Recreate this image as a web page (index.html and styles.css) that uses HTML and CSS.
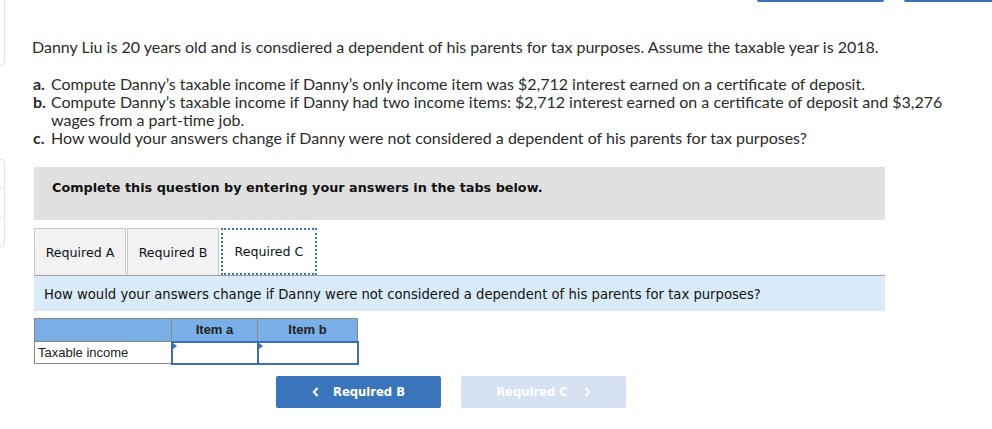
FILE: index.html
```html
<!DOCTYPE html>
<html>
<head>
<meta charset="utf-8">
<link rel="stylesheet" href="styles.css">
</head>
<body>
<div class="side-frag frag-top"></div>
<div class="side-frag frag-mid"><div class="frag-row"></div><div class="frag-row"></div><div class="frag-row last"></div></div>
<div class="top-bar bar-1"></div>
<div class="top-bar bar-2"></div>

<main class="page">
  <div class="question">
    <p class="intro">Danny Liu is 20 years old and is consdiered a dependent of his parents for tax purposes. Assume the taxable year is 2018.</p>
    <div class="parts">
      <div class="part"><span class="lbl">a.</span><span class="txt">Compute Danny’s taxable income if Danny’s only income item was $2,712 interest earned on a certificate of deposit.</span></div>
      <div class="part"><span class="lbl">b.</span><span class="txt">Compute Danny’s taxable income if Danny had two income items: $2,712 interest earned on a certificate of deposit and $3,276 wages from a part-time job.</span></div>
      <div class="part"><span class="lbl">c.</span><span class="txt">How would your answers change if Danny were not considered a dependent of his parents for tax purposes?</span></div>
    </div>
  </div>

  <div class="notice">Complete this question by entering your answers in the tabs below.</div>

  <div class="tabs">
    <div class="tab">Required A</div>
    <div class="tab">Required B</div>
    <div class="tab active">Required C</div>
  </div>
  <div class="tab-info">How would your answers change if Danny were not considered a dependent of his parents for tax purposes?</div>

  <table class="grid">
    <tr class="head"><th class="c1"></th><th class="c2">Item a</th><th class="c3">Item b</th></tr>
    <tr><td class="c1 label">Taxable income</td><td class="c2 inp"><span class="mark"></span></td><td class="c3 inp"><span class="mark"></span></td></tr>
  </table>

  <div class="nav">
    <button class="btn prev"><svg class="chev" width="7" height="10" viewBox="0 0 7 10"><path d="M5.5 1 L1.8 5 L5.5 9" fill="none" stroke="#fff" stroke-width="2"/></svg>Required B</button>
    <button class="btn next">Required C<svg class="chev" width="7" height="10" viewBox="0 0 7 10"><path d="M1.5 1 L5.2 5 L1.5 9" fill="none" stroke="#fff" stroke-width="2"/></svg></button>
  </div>
</main>
</body>
</html>
```

FILE: styles.css
```css
html, body { margin: 0; padding: 0; background: #fff; }
body { position: relative; width: 992px; height: 429px; overflow: hidden; }

.side-frag { position: absolute; left: -6px; width: 9px; border: 1px solid #e3e3e3; border-radius: 4px; background: #fff; }
.frag-top { top: -10px; height: 74px; }
.frag-mid { top: 159px; height: 86px; display: flex; flex-direction: column; }
.frag-row { flex: 1; border-bottom: 1px solid #e6e6e6; }
.frag-row.last { border-bottom: none; }

.top-bar { position: absolute; top: -4px; height: 6px; background: #3a73b8; border-radius: 0 0 2px 2px; }
.bar-1 { left: 757px; width: 127px; }
.bar-2 { left: 904px; width: 100px; }

.page { padding: 38px 0 0 32px; width: 853px; font-family: Lato, "Open Sans", sans-serif; color: #2b2b2b; }

.question { width: 925px; font-size: 16px; line-height: 18px; }
.intro { margin: 0 0 19px 0; }
.part { display: flex; }
.lbl { width: 19px; flex: none; font-weight: bold; padding-left: 1px; box-sizing: border-box; }
.txt { flex: 1; }

.notice { margin: 20px 0 0 2px; height: 53px; background: #e0e0e0; box-sizing: border-box; padding: 13px 18px; font-family: "DejaVu Sans", Verdana, sans-serif; font-weight: bold; font-size: 12.8px; color: #111; line-height: 16px; }

.tabs { margin: 8px 0 0 2px; display: flex; gap: 1px; border-bottom: 1px solid #a0a0a0; height: 47px; }
.tab { width: 92px; height: 47px; box-sizing: border-box; border: 1px solid #c8c8c8; border-bottom: none; background: #f2f2f2; font-family: "DejaVu Sans", Verdana, sans-serif; font-size: 12.6px; color: #111; display: flex; align-items: center; justify-content: center; }
.tab.active { width: 96px; background: #fff; border: 2px dotted #3a73b8; margin-left: 1px; }

.tab-info { margin-left: 2px; height: 35px; background: #d9ebf9; box-sizing: border-box; padding: 11px 10px 0; font-family: "DejaVu Sans", Verdana, sans-serif; font-size: 13.2px; color: #111; line-height: 15px; }

.grid { margin: 7px 0 0 2px; border-collapse: collapse; font-family: "Liberation Sans", Arial, sans-serif; font-size: 13px; color: #222; }
.grid th, .grid td { border: 1px solid #888; padding: 0; height: 22px; box-sizing: border-box; }
.grid .head th { background: #7aaee6; font-weight: bold; text-align: center; height: 23px; }
.c1 { width: 137px; }
.c2 { width: 86px; }
.c3 { width: 100px; }
.label { text-align: left; padding-left: 3px !important; }
.inp { position: relative; border: 2px solid #3a6fb3 !important; background: #fff; }
.mark { position: absolute; left: 0; top: 0; width: 0; height: 0; border-top: 3px solid transparent; border-bottom: 3px solid transparent; border-left: 4px solid #3a73b8; }

.nav { margin: 11px 0 0 244px; display: flex; gap: 20px; }
.btn { width: 165px; height: 32px; border: none; border-radius: 2px; font-family: "DejaVu Sans", Verdana, sans-serif; font-weight: bold; font-size: 11.6px; color: #fff; display: flex; align-items: center; justify-content: center; padding: 0; }
.btn.prev { background: #3a75bb; }
.btn.next { background: #d6e2f1; }
.prev .chev { margin-right: 14px; }
.next .chev { margin-left: 16px; }
```
